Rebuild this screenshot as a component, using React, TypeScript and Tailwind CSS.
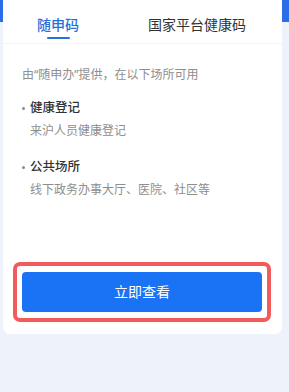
const places = [
  { title: '健康登记', desc: '来沪人员健康登记' },
  { title: '公共场所', desc: '线下政务办事大厅、医院、社区等' },
]

export default function App() {
  return (
    <div
      className="w-[289px] h-[392px] overflow-hidden bg-[linear-gradient(to_bottom,#2a6de6_22px,#eef2fb_22px)]"
      style={{ fontFamily: '"Noto Sans", "Noto Sans CJK SC", sans-serif' }}
    >
      {/* Card */}
      <div className="mx-[3px] w-[279px] h-[334px] bg-white rounded-b-[7px] flex flex-col">
        {/* Tabs */}
        <div className="flex pl-[34px] gap-[69px] pt-[15px] pb-[4px] border-b border-[#f3f4f6]">
          <div className="flex flex-col">
            <span className="text-[14px] leading-[20px] font-medium text-[#2570dc]">随申码</span>
            <div className="mt-[2px] mx-auto w-[23px] h-[2px] rounded-full bg-[#2570dc]" />
          </div>
          <span className="text-[14px] leading-[20px] text-[#333333]">国家平台健康码</span>
        </div>

        {/* Info */}
        <div className="px-[19px] pt-[23px]">
          <p className="text-[12px] leading-[16px] text-[#8e8e8e]">
            由“随申办”提供，在以下场所可用
          </p>
          <div className="mt-[16px] flex flex-col gap-[18px]">
            {places.map((p) => (
              <div key={p.title}>
                <div className="flex items-center">
                  <span className="w-[3px] h-[3px] rounded-full bg-[#8a8a8a] mr-[5px]" />
                  <span className="text-[12.5px] leading-[18px] font-medium text-[#333333]">{p.title}</span>
                </div>
                <p className="mt-[5px] pl-[8px] text-[12px] leading-[18px] text-[#8e8e8e]">{p.desc}</p>
              </div>
            ))}
          </div>
        </div>

        {/* Button */}
        <div className="mt-auto mb-[12px] ml-[10px] mr-[11px] border-[4px] border-[#f25b5b] rounded-[7px] px-[5px] py-[6px]">
          <button className="w-full h-[40px] rounded-[4px] bg-[#1a73f5] text-white text-[14px] leading-[20px]">
            立即查看
          </button>
        </div>
      </div>
    </div>
  )
}
